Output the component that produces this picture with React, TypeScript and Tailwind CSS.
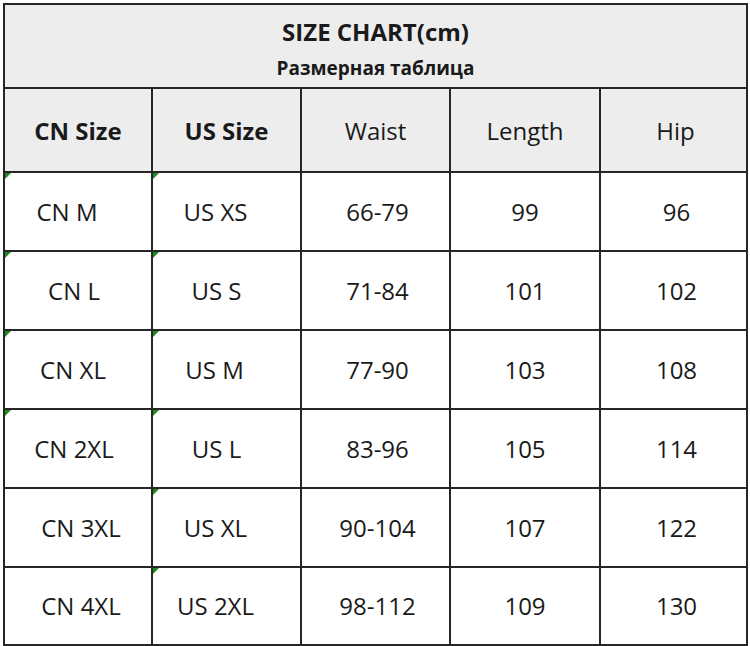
const ROWS = [
  { cn: 'CN M', us: 'US XS', waist: '66-79', length: '99', hip: '96', cnPad: 'pr-[22px]', usPad: 'pr-[22px]', cnMark: true },
  { cn: 'CN L', us: 'US S', waist: '71-84', length: '101', hip: '102', cnPad: 'pr-[8px]', usPad: 'pr-[20px]', cnMark: true },
  { cn: 'CN XL', us: 'US M', waist: '77-90', length: '103', hip: '108', cnPad: 'pr-[10px]', usPad: 'pr-[24px]', cnMark: true },
  { cn: 'CN 2XL', us: 'US L', waist: '83-96', length: '105', hip: '114', cnPad: 'pr-[8px]', usPad: 'pr-[20px]', cnMark: true },
  { cn: 'CN 3XL', us: 'US XL', waist: '90-104', length: '107', hip: '122', cnPad: 'pl-[6px]', usPad: 'pr-[22px]', cnMark: false },
  { cn: 'CN 4XL', us: 'US 2XL', waist: '98-112', length: '109', hip: '130', cnPad: 'pl-[6px]', usPad: 'pr-[22px]', cnMark: false },
];

function Mark() {
  return (
    <span className="absolute left-0 top-0 h-0 w-0 border-t-[6px] border-r-[6px] border-t-[#1d8a1d] border-r-transparent" />
  );
}

export default function App() {
  return (
    <div className="w-[750px] h-[646px] bg-white pl-[3px] pt-[3px] text-[#1a1a1a] font-['Open_Sans',sans-serif]">
      <div className="w-[745px] h-[643px] border-2 border-[#262626] grid grid-cols-[148px_149px_149px_150px_145px] grid-rows-[84px_84px_79px_79px_79px_79px_79px_76px]">
        <div className="col-span-5 border-b-2 border-[#262626] bg-[#ededed] flex flex-col items-center pt-[10px] font-bold">
          <div className="text-[24px] leading-[34px]">SIZE CHART(cm)</div>
          <div className="text-[19px] leading-[26px] mt-[6px]">Размерная таблица</div>
        </div>

        {['CN Size', 'US Size', 'Waist', 'Length', 'Hip'].map((h, i) => (
          <div
            key={h}
            className={`bg-[#ededed] border-b-2 border-[#262626] flex items-center justify-center text-[24px] pt-[2px] ${i < 2 ? 'font-bold' : ''} ${i < 4 ? 'border-r-2' : 'pl-[4px]'}`}
          >
            {h}
          </div>
        ))}

        {ROWS.map((r, ri) => {
          const last = ri === ROWS.length - 1;
          const cell = `relative flex items-center justify-center text-[24px] border-[#262626] ${last ? '' : 'border-b-2'}`;
          return [
            <div key={`${ri}-cn`} className={`${cell} border-r-2 ${r.cnPad}`}>
              {r.cnMark && <Mark />}
              {r.cn}
            </div>,
            <div key={`${ri}-us`} className={`${cell} border-r-2 ${r.usPad}`}>
              <Mark />
              {r.us}
            </div>,
            <div key={`${ri}-w`} className={`${cell} border-r-2 pl-[4px]`}>{r.waist}</div>,
            <div key={`${ri}-l`} className={`${cell} border-r-2`}>{r.length}</div>,
            <div key={`${ri}-h`} className={`${cell} pl-[6px]`}>{r.hip}</div>,
          ];
        })}
      </div>
    </div>
  );
}
